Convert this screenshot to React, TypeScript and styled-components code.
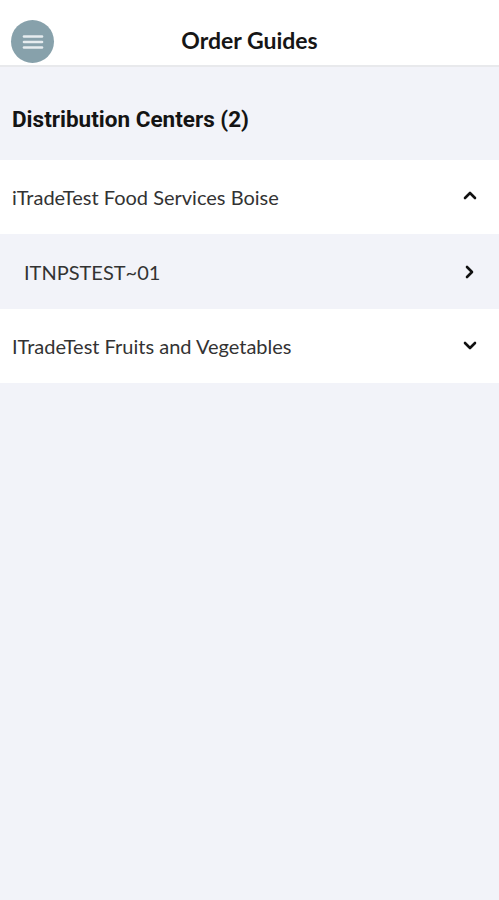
import { createGlobalStyle } from 'styled-components';
import styled from 'styled-components';

const GlobalStyle = createGlobalStyle`
  html, body {
    margin: 0;
    padding: 0;
    background: #f2f3f9;
  }
  * {
    box-sizing: border-box;
  }
`;

const Page = styled.div`
  min-height: 900px;
  background: #f2f3f9;
  font-family: Lato, "Noto Sans", sans-serif;
`;

const Header = styled.header`
  position: relative;
  display: flex;
  align-items: center;
  justify-content: center;
  height: 67px;
  padding-top: 15px;
  background: #ffffff;
  border-bottom: 2px solid #e8e9ec;
`;

const MenuButton = styled.div`
  position: absolute;
  left: 11px;
  top: 20px;
  width: 43px;
  height: 43px;
  border-radius: 50%;
  background: #87a1ab;
  display: flex;
  align-items: center;
  justify-content: center;
`;

const Title = styled.h1`
  margin: 0;
  font-size: 23px;
  font-weight: 700;
  color: #161616;
`;

const SectionTitle = styled.h2`
  margin: 0;
  height: 93px;
  display: flex;
  align-items: center;
  padding: 10px 12px 0;
  font-family: Roboto, "Noto Sans", sans-serif;
  font-size: 22.5px;
  font-weight: 700;
  color: #141414;
`;

const Row = styled.div<{ $sub?: boolean }>`
  display: flex;
  align-items: center;
  justify-content: space-between;
  height: ${p => (p.$sub ? 75 : 74)}px;
  padding: 0 22px 0 ${p => (p.$sub ? 24 : 12)}px;
  background: ${p => (p.$sub ? '#f2f3f9' : '#ffffff')};
  font-size: 20px;
  color: #333333;
`;

const Chevron = ({ dir }: { dir: 'up' | 'down' | 'right' }) => {
  const d =
    dir === 'up' ? 'M2 8 L7 3 L12 8' : dir === 'down' ? 'M2 4 L7 9 L12 4' : 'M4 2 L9 7 L4 12';
  return (
    <svg width="14" height="14" viewBox="0 0 14 14">
      <path d={d} fill="none" stroke="#111" strokeWidth="2.6" strokeLinecap="round" strokeLinejoin="round" />
    </svg>
  );
};

const App = () => (
  <Page>
    <GlobalStyle />
    <Header>
      <MenuButton>
        <svg width="22" height="16" viewBox="0 0 22 16">
          <g stroke="#e6ecef" strokeWidth="2.6" strokeLinecap="round">
            <line x1="2" y1="2.5" x2="20" y2="2.5" />
            <line x1="2" y1="8" x2="20" y2="8" />
            <line x1="2" y1="13.5" x2="20" y2="13.5" />
          </g>
        </svg>
      </MenuButton>
      <Title>Order Guides</Title>
    </Header>
    <SectionTitle>Distribution Centers (2)</SectionTitle>
    <Row>
      <span>iTradeTest Food Services Boise</span>
      <Chevron dir="up" />
    </Row>
    <Row $sub>
      <span>ITNPSTEST~01</span>
      <Chevron dir="right" />
    </Row>
    <Row>
      <span>ITradeTest Fruits and Vegetables</span>
      <Chevron dir="down" />
    </Row>
  </Page>
);

export default App;
